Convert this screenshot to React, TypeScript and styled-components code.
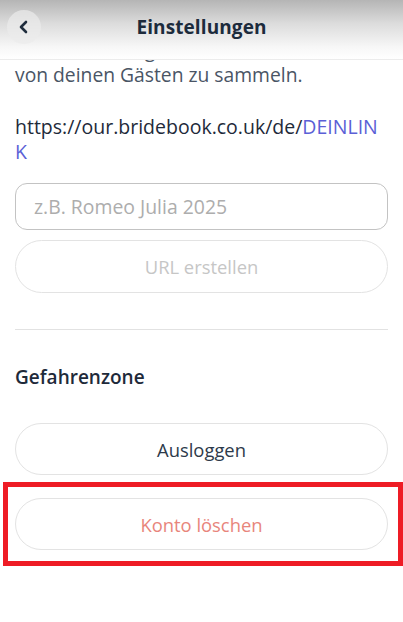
import styled, { createGlobalStyle } from "styled-components";

const GlobalStyle = createGlobalStyle`
  html, body {
    margin: 0;
    padding: 0;
    background: #ffffff;
    font-family: "Open Sans", "Liberation Sans", sans-serif;
  }
  * {
    box-sizing: border-box;
  }
`;

export default function App() {
  return (
    <>
      <GlobalStyle />
      <Header>
        <BackButton aria-label="Zurück">
          <svg width="12" height="14" viewBox="0 0 12 14" fill="none">
            <path
              d="M8 2L3 7l5 5"
              stroke="#1f2d3d"
              strokeWidth="2.6"
              strokeLinecap="round"
              strokeLinejoin="round"
            />
          </svg>
        </BackButton>
        <Title>Einstellungen</Title>
      </Header>
      <Page>
        <Intro>
          Teile deinen eigenen Link, um Fotos
          <br />
          von deinen Gästen zu sammeln.
        </Intro>
        <UrlText>
          https://our.bridebook.co.uk/de/<UrlSlug>DEINLINK</UrlSlug>
        </UrlText>
        <TextInput placeholder="z.B. Romeo Julia 2025" />
        <PillButton $tone="disabled">URL erstellen</PillButton>
        <Divider />
        <SectionTitle>Gefahrenzone</SectionTitle>
        <PillButton $tone="default">Ausloggen</PillButton>
        <Highlight>
          <PillButton $tone="danger">Konto löschen</PillButton>
        </Highlight>
      </Page>
    </>
  );
}

const Header = styled.header`
  position: fixed;
  top: 0;
  left: 0;
  right: 0;
  height: 60px;
  display: flex;
  align-items: center;
  justify-content: center;
  background: linear-gradient(to bottom, #b5b5b5 0%, #dcdcdc 40%, #f7f7f7 80%, #ffffff 100%);
  border-bottom: 1px solid #ececec;
  z-index: 2;
`;

const BackButton = styled.button`
  position: absolute;
  left: 7px;
  top: 10px;
  width: 34px;
  height: 34px;
  border-radius: 50%;
  border: 0;
  padding: 0;
  background: rgba(235, 235, 235, 0.7);
  display: flex;
  align-items: center;
  justify-content: center;
`;

const Title = styled.h1`
  margin: 0 0 6px;
  font-size: 19px;
  font-weight: 700;
  color: #1c2b3c;
  letter-spacing: 0.1px;
`;

const Page = styled.main`
  display: flex;
  flex-direction: column;
  padding: 37px 15px 40px;
`;

const Intro = styled.p`
  margin: 0;
  font-size: 19.3px;
  line-height: 25px;
  color: #4a5565;
  white-space: nowrap;
`;

const UrlText = styled.p`
  margin: 27px 0 0;
  font-size: 19.5px;
  line-height: 25px;
  color: #1e2a3a;
  word-break: break-all;
`;

const UrlSlug = styled.span`
  color: #5b5fd6;
`;

const TextInput = styled.input`
  margin-top: 19px;
  height: 47px;
  width: 100%;
  border: 1px solid #c3c3c3;
  border-radius: 12px;
  padding: 0 18px;
  font-family: inherit;
  font-size: 19.4px;
  color: #1e2a3a;
  outline: none;
  &::placeholder {
    color: #adadad;
  }
`;

const toneColor = {
  disabled: "#c6c6c6",
  default: "#2d3a4a",
  danger: "#e8857b",
};

const PillButton = styled.button<{ $tone: keyof typeof toneColor }>`
  margin-top: ${(p) => (p.$tone === "disabled" ? "10px" : p.$tone === "default" ? "34px" : "0")};
  height: ${(p) => (p.$tone === "disabled" ? "53px" : "52px")};
  width: 100%;
  border: 1px solid #e3e3e3;
  border-radius: 27px;
  background: #ffffff;
  font-family: inherit;
  font-size: 18.4px;
  color: ${(p) => toneColor[p.$tone]};
`;

const Divider = styled.hr`
  margin: 36px 0 0;
  border: 0;
  border-top: 1px solid #e2e2e2;
`;

const SectionTitle = styled.h2`
  margin: 35px 0 0;
  font-size: 19px;
  line-height: 24px;
  font-weight: 600;
  color: #1e2a3a;
`;

const Highlight = styled.div`
  margin: 7px -15px 0 -12px;
  border: 5px solid #ee1c25;
  padding: 11px 10px 11px 7px;
`;
